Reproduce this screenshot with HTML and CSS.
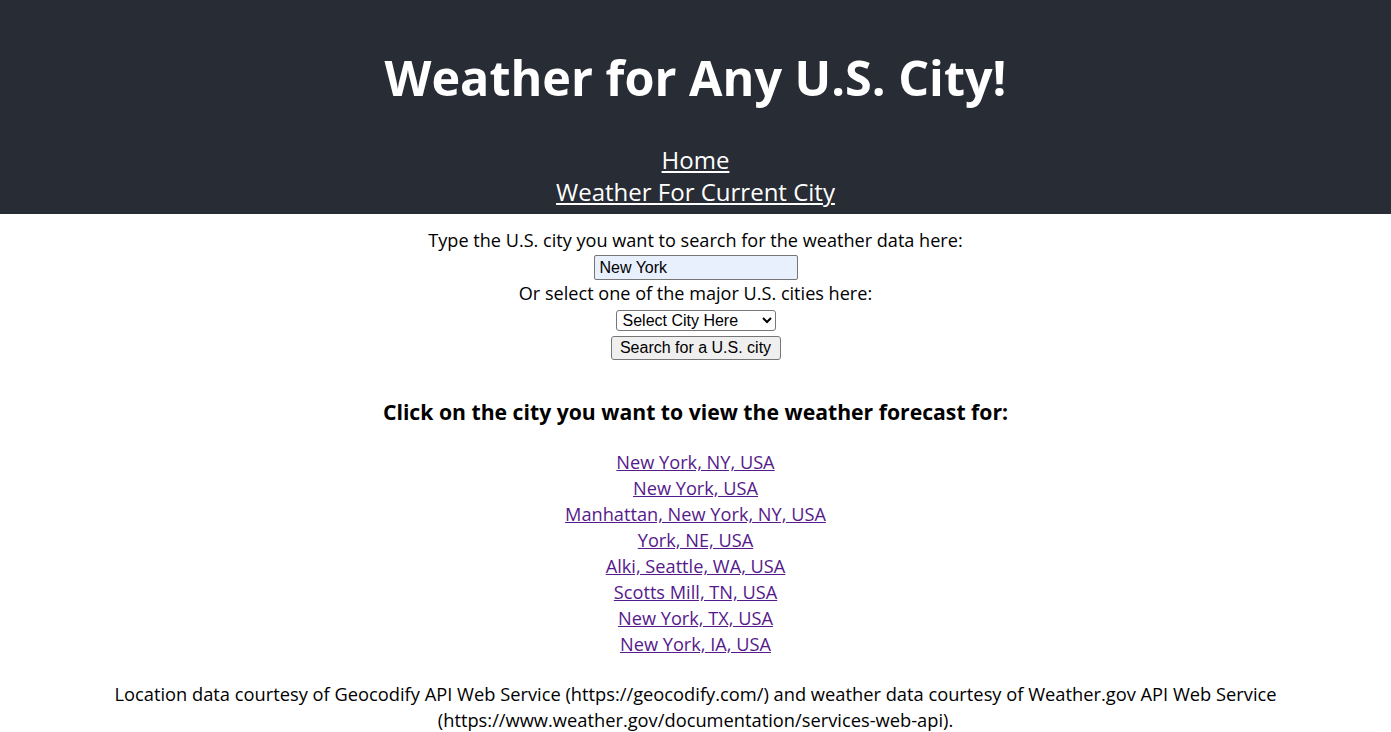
FILE: index.html
```html
<!DOCTYPE html>
<html lang="en">
<head>
<meta charset="utf-8">
<title>Weather for Any U.S. City!</title>
<link rel="stylesheet" href="styles.css">
</head>
<body>
<header class="app-header">
  <h1 class="title">Weather for Any U.S. City!</h1>
  <nav class="nav">
    <a class="nav-link" href="#">Home</a>
    <a class="nav-link" href="#">Weather For Current City</a>
  </nav>
</header>
<main class="main">
  <form class="search">
    <label class="label" for="city">Type the U.S. city you want to search for the weather data here:</label>
    <input class="city-input" id="city" type="text" value="New York">
    <label class="label" for="major">Or select one of the major U.S. cities here:</label>
    <select class="city-select" id="major">
      <option>Select City Here</option>
    </select>
    <button class="search-btn" type="button">Search for a U.S. city</button>
  </form>
  <h3 class="results-title">Click on the city you want to view the weather forecast for:</h3>
  <div class="results">
    <a class="result" href="#">New York, NY, USA</a>
    <a class="result" href="#">New York, USA</a>
    <a class="result" href="#">Manhattan, New York, NY, USA</a>
    <a class="result" href="#">York, NE, USA</a>
    <a class="result" href="#">Alki, Seattle, WA, USA</a>
    <a class="result" href="#">Scotts Mill, TN, USA</a>
    <a class="result" href="#">New York, TX, USA</a>
    <a class="result" href="#">New York, IA, USA</a>
  </div>
  <p class="credits">Location data courtesy of Geocodify API Web Service (https://geocodify.com/) and weather data courtesy of Weather.gov API Web Service (https://www.weather.gov/documentation/services-web-api).</p>
</main>
</body>
</html>
```

FILE: styles.css
```css
html, body {
  margin: 0;
  padding: 0;
  background: #ffffff;
}

body {
  font-family: "Open Sans", "Noto Sans", sans-serif;
  color: #000000;
  text-align: center;
}

.app-header {
  background: #282c34;
  color: #ffffff;
  padding: 47px 0 6px;
  display: flex;
  flex-direction: column;
  align-items: center;
}

.title {
  margin: 0 0 37px;
  font-size: 48.5px;
  line-height: 60px;
  font-weight: 700;
}

.nav {
  display: flex;
  flex-direction: column;
  align-items: center;
}

.nav-link {
  color: #ffffff;
  font-size: 24px;
  line-height: 32px;
  text-decoration: underline;
}

.main {
  padding: 13px 8px 0;
  display: flex;
  flex-direction: column;
  align-items: center;
}

.search {
  display: flex;
  flex-direction: column;
  align-items: center;
}

.label {
  font-size: 18.1px;
  line-height: 26px;
}

.city-input {
  box-sizing: border-box;
  width: 204px;
  height: 25px;
  margin-top: 2px;
  padding: 1px 5px;
  border: 1px solid #767676;
  border-radius: 2px;
  background: #e8f0fe;
  font-family: "Liberation Sans", Arial, sans-serif;
  font-size: 16px;
  color: #000000;
}

.city-select {
  box-sizing: border-box;
  width: 160px;
  height: 21px;
  margin-top: 4px;
  padding: 0 0 0 2px;
  border: 1px solid #767676;
  border-radius: 3px;
  background: #ffffff;
  font-family: "Liberation Sans", Arial, sans-serif;
  font-size: 16px;
  color: #000000;
}

.search-btn {
  box-sizing: border-box;
  width: 170px;
  height: 24px;
  margin-top: 5px;
  padding: 0 6px;
  border: 1px solid #767676;
  border-radius: 3px;
  background: #efefef;
  font-family: "Liberation Sans", Arial, sans-serif;
  font-size: 16px;
  color: #000000;
}

.results-title {
  margin: 37px 0 0;
  font-size: 21.2px;
  line-height: 30px;
  font-weight: 700;
}

.results {
  margin-top: 22px;
  display: flex;
  flex-direction: column;
  align-items: center;
}

.result {
  color: #551a8b;
  font-size: 18.2px;
  line-height: 26px;
  text-decoration: underline;
}

.credits {
  margin: 24px 0 0;
  font-size: 18.3px;
  line-height: 26px;
}
```
